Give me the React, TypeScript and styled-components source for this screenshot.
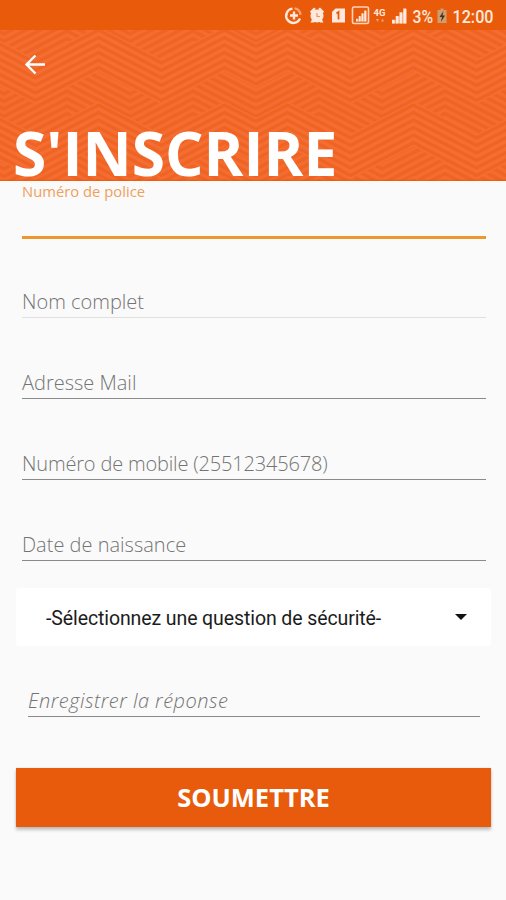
import React from "react";
import styled, { createGlobalStyle } from "styled-components";

const GlobalStyle = createGlobalStyle`
  *, *::before, *::after { box-sizing: border-box; }
  body { margin: 0; background: #fafafa; }
`;

const Screen = styled.div`
  width: 506px;
  height: 900px;
  overflow: hidden;
  display: flex;
  flex-direction: column;
  background: #fafafa;
  font-family: "Open Sans", sans-serif;
`;

const StatusBar = styled.div`
  height: 30px;
  flex: none;
  background: #e95a0a;
`;

const StatusIcons = styled.svg`
  display: block;
`;

const Header = styled.header`
  position: relative;
  height: 151px;
  flex: none;
  display: flex;
  flex-direction: column;
  justify-content: space-between;
  background: #f36c31;
`;

const Pattern = styled.svg`
  position: absolute;
  inset: 0;
`;

const BackButton = styled.button`
  position: relative;
  width: 32px;
  height: 32px;
  margin: 19px 0 0 19px;
  padding: 0;
  border: 0;
  background: none;
`;

const Title = styled.h1`
  position: relative;
  margin: 0 0 0 13px;
  height: 56px;
  line-height: 56px;
  font-size: 60.5px;
  font-weight: 700;
  color: #fff;
  white-space: nowrap;
`;

const Form = styled.form`
  display: flex;
  flex-direction: column;
`;

const Field = styled.label<{ $height: number; $line: string; $thick?: number; $inset?: number }>`
  display: flex;
  flex-direction: column;
  justify-content: flex-end;
  height: ${(p) => p.$height}px;
  margin-right: ${(p) => 19 + (p.$inset ?? 1)}px;
  margin-left: ${(p) => 21 + (p.$inset ?? 1)}px;
  border-bottom: ${(p) => p.$thick ?? 1}px solid ${(p) => p.$line};
`;

const Placeholder = styled.span<{ $italic?: boolean; $spacing?: number }>`
  height: 30px;
  line-height: 30px;
  font-size: 20px;
  font-weight: 300;
  font-style: ${(p) => (p.$italic ? "italic" : "normal")};
  letter-spacing: ${(p) => p.$spacing ?? 0}px;
  color: #747474;
  white-space: nowrap;
`;

const FloatingLabel = styled.span`
  height: 55px;
  line-height: 20px;
  font-size: 14.8px;
  color: #f0a05a;
`;

const Select = styled.div`
  display: flex;
  align-items: center;
  justify-content: space-between;
  height: 58px;
  margin: 27px 15px 0 16px;
  padding: 0 24px 0 30px;
  border-radius: 3px;
  background: #fff;
  font-family: Roboto, sans-serif;
  font-size: 19.5px;
  letter-spacing: -0.1px;
  color: #1c1c1c;
`;

const SelectValue = styled.span`
  padding-top: 2px;
`;

const Submit = styled.button`
  height: 59px;
  margin: 51px 15px 0 16px;
  padding: 0 0 2px;
  border: 0;
  background: #e95b0c;
  box-shadow: 0 3px 3px rgba(0, 0, 0, 0.22), 0 0 2px rgba(0, 0, 0, 0.12);
  color: #fff;
  font-family: "Open Sans", sans-serif;
  font-size: 25.5px;
  font-weight: 700;
`;

const HALF = 31.5;
const AMP = 33;
const STEP = 7.5;
const BAND = STEP * 10;

/** Zigzag points from x = 0; phase 0 rises first to a peak at x = 31.5, phase 1 at x = 63. */
function zigzag(phase: number, y: number): string[] {
  const pts: string[] = [];
  for (let i = 0; i <= 9; i++) {
    const t = (((i - 1 - phase) % 4) + 4) % 4;
    const h = t === 0 ? 0 : t === 2 ? 1 : 0.5;
    pts.push(`${i * HALF},${y + h * AMP}`);
  }
  return pts;
}

function Chevrons() {
  const under: React.ReactNode[] = [];
  const over: React.ReactNode[] = [];
  for (let k = -6; k < 24; k++) {
    under.push(<polyline key={k} points={zigzag(1, 8.5 + k * STEP).join(" ")} />);
  }
  for (let b = -1; b < 3; b++) {
    const top = b * BAND;
    const fill = [
      ...zigzag(0, top - STEP / 2),
      ...zigzag(0, top + STEP * 5.5).reverse(),
    ].join(" ");
    over.push(<polygon key={`f${b}`} points={fill} fill="#f46e34" stroke="none" />);
    for (let k = 0; k < 6; k++) {
      over.push(<polyline key={`${b}-${k}`} points={zigzag(0, top + k * STEP).join(" ")} />);
    }
  }
  return (
    <g fill="none" stroke="#f06423" strokeWidth="3.3">
      {under}
      {over}
    </g>
  );
}

function Signal({ x, y, size }: { x: number; y: number; size: number }) {
  const w = size / 4;
  return (
    <g transform={`translate(${x} ${y})`}>
      <path d={`M0 ${size}L${size} 0V${size}z`} opacity=".4" />
      {[0, 1, 2, 3].map((i) => (
        <rect
          key={i}
          x={i * w}
          y={size - (size * (i + 1)) / 4}
          width={w - 0.9}
          height={(size * (i + 1)) / 4}
        />
      ))}
    </g>
  );
}

export default function App() {
  return (
    <>
      <GlobalStyle />
      <Screen>
        <StatusBar>
          <StatusIcons width="506" height="30" fill="#ffe9dc">
            <g fill="none" stroke="#ffe9dc" strokeWidth="2.4">
              <path d="M292.500 8.600a7.200 7.200 0 1 0 7.500 10" />
              <path d="M294.500 8.400a7.200 7.200 0 0 1 6 6.400" opacity=".5" />
              <path d="M294 11.500v8M290 15.500h8" />
            </g>
            <circle cx="317" cy="16" r="6.5" />
            <path d="M310 11.500l4-4 1.800 1.500-4.500 4.500zM324 11.500l-4-4-1.800 1.500 4.500 4.500zM310.500 22.500l2-4 3 2-1.500 2zM323.500 22.500l-2-4-3 2 1.500 2z" />
            <path d="M317 13v3.500h3" fill="none" stroke="#f0936b" strokeWidth="1.200" />
            <path d="M335.500 8.500h9.500v14h-13v-10.500z" />
            <path d="M336.500 13.500l2-1.500v7.500" fill="none" stroke="#e95a0a" strokeWidth="1.800" />
            <rect x="352.500" y="7" width="16" height="16.500" rx="1.500" fill="none" stroke="#ffd3bc" strokeWidth="1.600" />
            <Signal x={356} y={10.5} size={11} />
            <text x="373.500" y="15.500" fontFamily="Roboto, sans-serif" fontWeight="700" fontSize="9.500">4G</text>
            <path d="M376 19h3l-1.500 3zM381 21.500h3l-1.500-3z" opacity=".5" />
            <Signal x={392} y={8.5} size={15} />
            <text x="412.500" y="22.500" fontFamily="Roboto, sans-serif" fontWeight="500" fontSize="18.500" textLength="20.500" lengthAdjust="spacingAndGlyphs">3%</text>
            <path d="M440.500 8.500h3v1.500h3v13h-9v-13h3z" fill="#cf9d70" />
            <path d="M443.500 11l-4 6h2.500l-1 5 4-6.500h-2.500z" fill="#45301c" />
            <text x="452.500" y="22.500" fontFamily="Roboto, sans-serif" fontWeight="500" fontSize="18.500" textLength="41" lengthAdjust="spacingAndGlyphs">12:00</text>
          </StatusIcons>
        </StatusBar>
        <Header>
          <Pattern width="506" height="151">
            <g transform="translate(256 0)"><Chevrons /></g>
            <g transform="translate(256 0) scale(-1 1)"><Chevrons /></g>
            <rect y="149.500" width="506" height="1.500" fill="#e95a0a" opacity=".6" />
          </Pattern>
          <BackButton type="button" aria-label="Retour">
            <svg width="32" height="32" fill="none" stroke="#fff" strokeWidth="2.400">
              <path d="M26 15.500H8M16.500 6.500l-9 9 9 9" />
            </svg>
          </BackButton>
          <Title>S'INSCRIRE</Title>
        </Header>
        <Form>
          <Field $height={58} $line="#ec982f" $thick={3}>
            <FloatingLabel>Numéro de police</FloatingLabel>
          </Field>
          <Field $height={79} $line="#e0e0e0">
            <Placeholder>Nom complet</Placeholder>
          </Field>
          <Field $height={81} $line="#8a8a8a">
            <Placeholder>Adresse Mail</Placeholder>
          </Field>
          <Field $height={81} $line="#8a8a8a">
            <Placeholder $spacing={-0.17}>Numéro de mobile (25512345678)</Placeholder>
          </Field>
          <Field $height={81} $line="#8a8a8a">
            <Placeholder>Date de naissance</Placeholder>
          </Field>
          <Select>
            <SelectValue>-Sélectionnez une question de sécurité-</SelectValue>
            <svg width="12" height="6"><path d="M0 0h12L6 6z" fill="#111" /></svg>
          </Select>
          <Field $height={71} $line="#8a8a8a" $inset={7}>
            <Placeholder $italic $spacing={0.47}>Enregistrer la réponse</Placeholder>
          </Field>
          <Submit type="button">SOUMETTRE</Submit>
        </Form>
      </Screen>
    </>
  );
}
